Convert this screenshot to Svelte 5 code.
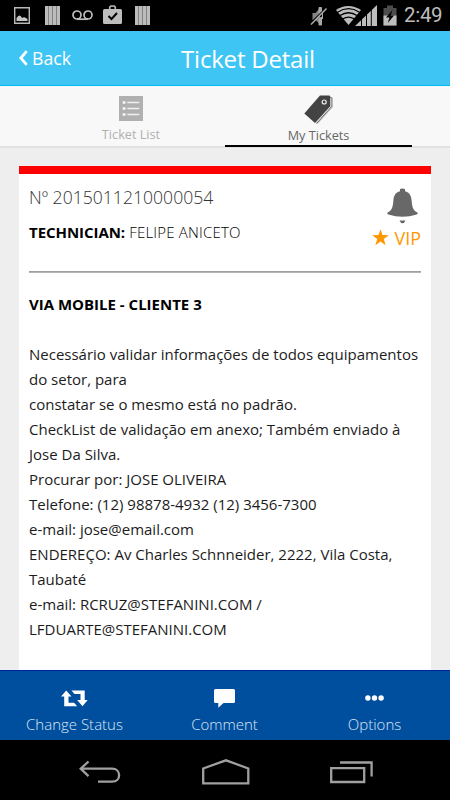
<script lang="ts">
  const description = [
    "Necessário validar informações de todos equipamentos",
    "do setor, para",
    "constatar se o mesmo está no padrão.",
    "CheckList de validação em anexo; Também enviado à",
    "Jose Da Silva.",
    "Procurar por: JOSE OLIVEIRA",
    "Telefone: (12) 98878-4932 (12) 3456-7300",
    "e-mail: jose@email.com",
    "ENDEREÇO: Av Charles Schnneider, 2222, Vila Costa,",
    "Taubaté",
    "e-mail: RCRUZ@STEFANINI.COM /",
    "LFDUARTE@STEFANINI.COM",
  ];

  let tab = $state<"list" | "mine">("mine");
</script>

{#snippet bars()}
  <svg class="bars" width="15" height="19" viewBox="0 0 15 19">
    <path d="M0 0h15v19H0z" fill="#828282" />
    <path d="M0 0h3v19H0zM4 0h3v19H4zM8 0h3v19H8zM12 0h3v19h-3z" fill="#bcbcbc" />
  </svg>
{/snippet}

<div class="screen">
  <div class="status">
    <div class="notifications">
      <svg width="16" height="17" viewBox="0 0 16 17">
        <path d="M.7.7h14.6v15.6H.7z" fill="none" stroke="#b8b8b8" stroke-width="1.4" />
        <path d="M2.500 14v-3q1.500-2.500 3-2.500T8 11q1.500-1 3-.5t2.500 1.500v2z" fill="#c4c4c4" />
      </svg>
      {@render bars()}
      <svg class="voicemail" width="21" height="11" viewBox="0 0 21 11">
        <g fill="none" stroke="#bdbdbd" stroke-width="1.7">
          <circle cx="5" cy="5" r="4" />
          <circle cx="16" cy="5" r="4" />
          <path d="M5 9.2h11" />
        </g>
      </svg>
      <svg class="case" width="19" height="20" viewBox="0 0 19 20">
        <path d="M6.7 5V2.2L8 1h3l1.3 1.2V5" fill="none" stroke="#bdbdbd" stroke-width="1.6" />
        <rect y="4" width="19" height="15" rx="1.5" fill="#bdbdbd" />
        <path d="M5.5 11l3 3 5.5-6" fill="none" stroke="#000" stroke-width="2" />
      </svg>
      {@render bars()}
    </div>
    <div class="system">
      <svg class="mute" width="18" height="20" viewBox="0 0 18 20">
        <path d="M2.500 7h3L10 2v16l-4.500-4h-3z" fill="#858585" />
        <path d="M9 1.500h2.500V7L9 9zM9 13l2.500-2v8H9zM12.500 7v6" fill="#a8a8a8" stroke="#a8a8a8" />
        <path d="M15.500 2.500L.2 17.500" stroke="#000" stroke-width="1.300" />
        <path d="M16.5 2.5L1 18.5" stroke="#aaa" stroke-width="1.5" />
      </svg>
      <svg class="wifi" width="25" height="19" viewBox="0 0 25 19">
        <path d="M0 4Q12 -4 25 4L12.5 19z" fill="#bdbdbd" />
        <path
          d="M1.5 6.2Q12.5 -1 23.5 6.2M4 9.5Q12.5 4 21 9.5M7 12.8Q12.5 9.5 18 12.8"
          fill="none"
          stroke="#000"
          stroke-width="1.3"
        />
      </svg>
      <svg class="signal" width="22" height="21" viewBox="0 0 22 21">
        <path d="M0 21L22 0v21z" fill="#bdbdbd" />
        <path d="M6.5 12v9M11.5 8v13M16.3 3v18" stroke="#000" stroke-width="1" />
      </svg>
      <svg class="battery" width="14" height="21" viewBox="0 0 14 21">
        <path d="M.5 3H4V.5h6V3h3.5v17.5H.5z" fill="#4c4c4c" />
        <path d="M.5 10.5h13v10H.5z" fill="#bdbdbd" />
        <path d="M9.5 5L3 12.5h3.5L4.8 18l6.2-7.5H7.7z" fill="#000" />
      </svg>
      <span class="clock">2:49</span>
    </div>
  </div>

  <header>
    <button class="back">
      <svg width="9" height="16" viewBox="0 0 9 16">
        <path d="M7.7 1.2L1.8 8l5.9 6.8" fill="none" stroke="#fff" stroke-width="2.8" />
      </svg>
      <span>Back</span>
    </button>
    <h1>Ticket Detail</h1>
  </header>

  <nav class="tabs">
    <button class="tab" class:on={tab === "list"} onclick={() => (tab = "list")}>
      <svg width="24" height="25" viewBox="0 0 24 25">
        <path d="M0 0h24v25H0z" fill="#b0b0b0" />
        <path
          d="M3.7 6.5h2.8M3.7 12.5h2.8M3.7 18.5h2.8"
          stroke="#f8f8f8"
          stroke-width="2.4"
        />
        <path d="M8.3 6.5h12M8.3 12.5h12M8.3 18.5h12" stroke="#f0f0f0" stroke-width="1.5" />
      </svg>
      <span>Ticket List</span>
    </button>
    <button class="tab mine" class:on={tab === "mine"} onclick={() => (tab = "mine")}>
      <svg width="29" height="29" viewBox="0 0 29 29">
        <path d="M26 2l3 1v9L14 28.5l-3-.5z" fill="#b9b9b9" />
        <path d="M27.2 2v9.7L12.5 28.6" fill="none" stroke="#555" stroke-width=".8" />
        <path d="M16 .5h9.5L26.5 2v9L11 28 .3 18.5z" fill="#434343" />
        <path d="M26.8 3v8.3L11.8 28" fill="none" stroke="#f8f8f8" stroke-width=".8" />
        <circle cx="20.2" cy="7" r="2" fill="#434343" stroke="#eee" stroke-width="1.2" />
      </svg>
      <span>My Tickets</span>
    </button>
  </nav>

  <main>
    <article>
      <div class="summary">
        <div>
          <div class="number">Nº 2015011210000054</div>
          <div class="tech"><b>TECHNICIAN:</b> FELIPE ANICETO</div>
        </div>
        <div class="flags">
          <svg width="31" height="36" viewBox="0 0 31 36">
            <path
              d="M13 1q2.500-1 5 0v2.200c4.500 1 6.200 4.500 6.600 9 .5 6.500 1.300 10 5.400 12 1 .7 1 1.600-.3 2.300Q15.500 31 1.300 26.500C0 25.800 0 24.900 1 24.200c4.100-2 4.900-5.500 5.400-12 .4-4.500 2.100-8 6.600-9z"
              fill="#686868"
            />
            <path d="M12.500 32.500h6q-1 2.700-3 2.700t-3-2.700z" fill="#686868" />
          </svg>
          <div class="vip">
            <svg width="17" height="17" viewBox="0 0 17 17">
              <path
                d="M8.500.3l2 5.800 6.300.1-5 3.900 1.800 6.100-5.100-3.600-5.100 3.600 1.800-6.100-5-3.900 6.300-.1z"
                fill="#ff9800"
              />
            </svg>
            <span>VIP</span>
          </div>
        </div>
      </div>
      <hr />
      <h2>VIA MOBILE - CLIENTE 3</h2>
      <div class="description">
        {#each description as line}
          <p>{line}</p>
        {/each}
      </div>
    </article>
  </main>

  <footer>
    <button>
      <svg width="27" height="17" viewBox="0 0 27 17">
        <path
          d="M5.200.5L10.500 6.500H7.500v6.300h5.500l3.200 3.400H3.200V6.500H0zM10.500.5h13.200V10h3L21.500 16.300 16.200 10h3.300V4h-6z"
          fill="#fff"
        />
      </svg>
      <span>Change Status</span>
    </button>
    <button>
      <svg width="21" height="19" viewBox="0 0 21 19">
        <path d="M1.500 0h18q1.500 0 1.500 1.500v11q0 1.500-1.500 1.500H9.500L4.300 18.800V14H1.500Q0 14 0 12.500v-11Q0 0 1.500 0z" fill="#fff" />
      </svg>
      <span>Comment</span>
    </button>
    <button>
      <svg width="19" height="17" viewBox="0 0 19 17">
        <g fill="#fff">
          <circle cx="2.900" cy="8" r="2.700" />
          <circle cx="9.500" cy="8" r="2.700" />
          <circle cx="16.100" cy="8" r="2.700" />
        </g>
      </svg>
      <span>Options</span>
    </button>
  </footer>

  <div class="keys">
    <svg width="42" height="24" viewBox="0 0 42 24">
      <path d="M9.500 1.500L1.700 8.700l7.800 7.500M2 8.700h31c9.500 0 9.500 13 0 13H19" />
    </svg>
    <svg width="48" height="26" viewBox="0 0 48 26">
      <path d="M1.200 24.400V9.500L24 1.300l22.300 8.200v14.900z" />
    </svg>
    <svg width="43" height="24" viewBox="0 0 43 24">
      <path d="M1.200 8.200h33v13.800h-33zM10 2.500h31.600v14" />
    </svg>
  </div>
</div>

<style>
  :global(body) {
    margin: 0;
    background: #000;
  }
  .screen {
    width: 450px;
    height: 800px;
    display: flex;
    flex-direction: column;
    overflow: hidden;
    background: #eee;
    font-family: "Open Sans", sans-serif;
    color: #000;
  }
  svg {
    display: block;
    flex: none;
  }
  button {
    border: none;
    padding: 0;
    background: none;
    font: inherit;
    color: inherit;
  }
  .status {
    flex: none;
    height: 31px;
    box-sizing: border-box;
    padding: 0 8px 0 14px;
    display: flex;
    justify-content: space-between;
    background: #000;
  }
  .notifications,
  .system {
    display: flex;
    align-items: center;
  }
  .bars {
    margin-left: 15px;
  }
  .voicemail {
    margin-left: 12px;
  }
  .case {
    margin: -2px -2px 0 10px;
  }
  .wifi {
    margin: -1px 0 0 8px;
  }
  .signal {
    margin-left: -6px;
  }
  .battery {
    margin-left: 6px;
  }
  .clock {
    margin-left: 7px;
    width: 38px;
    font: 20.5px/33px Roboto, sans-serif;
    letter-spacing: -0.3px;
    color: #bdbdbd;
    white-space: nowrap;
  }
  header {
    flex: none;
    height: 55px;
    box-sizing: border-box;
    display: grid;
    grid-template-columns: 100px 1fr 54px;
    background: #3fc5f3;
    border-bottom: 1px solid #03b9f4;
    color: #fff;
  }
  .back {
    display: flex;
    align-items: center;
    gap: 4px;
    padding-left: 19px;
    padding-bottom: 2px;
    font-size: 17.7px;
  }
  h1 {
    margin: 0;
    font-size: 24px;
    line-height: 55px;
    font-weight: 400;
    letter-spacing: -0.2px;
    text-align: center;
    white-space: nowrap;
  }
  .tabs {
    flex: none;
    height: 62px;
    box-sizing: border-box;
    padding: 0 38px;
    display: grid;
    grid-template-columns: 1fr 1fr;
    background: #f8f8f8;
    border-bottom: 2px solid #e1e1e1;
  }
  .tab {
    height: 61px;
    box-sizing: border-box;
    padding: 10px 1px 0 0;
    display: flex;
    flex-direction: column;
    align-items: center;
    gap: 4px;
    font-size: 12.7px;
    line-height: 18px;
    color: #b0b0b0;
    border-bottom: 2px solid transparent;
  }
  .tab.mine {
    padding: 9px 0 0;
    gap: 2px;
  }
  .tab.on {
    color: #666;
    border-bottom-color: #000;
  }
  main {
    flex: 1;
    min-height: 0;
    padding: 18px 19px 0;
    overflow: hidden;
  }
  article {
    height: 100%;
    box-sizing: border-box;
    padding: 0 10px;
    background: #fff;
    border-top: 8px solid #f00;
  }
  .summary {
    height: 97px;
    display: flex;
    justify-content: space-between;
  }
  .number {
    padding-top: 11px;
    font-size: 17.6px;
    line-height: 25px;
    font-weight: 300;
    color: #333;
  }
  .tech {
    padding-top: 10px;
    font-size: 15px;
    line-height: 24px;
    font-weight: 300;
    letter-spacing: 0.2px;
  }
  .tech b {
    font-weight: 700;
    letter-spacing: -0.05px;
  }
  .flags {
    display: flex;
    flex-direction: column;
    align-items: flex-end;
    padding-top: 14px;
  }
  .flags > svg {
    margin-right: 3px;
  }
  .vip {
    display: flex;
    align-items: center;
    gap: 5px;
    font-size: 18px;
    line-height: 29px;
    color: #ff9800;
  }
  .vip svg {
    margin-bottom: 3px;
  }
  hr {
    margin: 0;
    height: 2px;
    border: none;
    box-sizing: border-box;
    border-top: 1px solid #a0a0a0;
    background: #b4b4b4;
  }
  h2 {
    margin: 19px 0 25px;
    font-size: 15px;
    line-height: 25px;
    font-weight: 700;
  }
  p {
    margin: 0;
    font-size: 15px;
    line-height: 25px;
    color: #1c1c1c;
    white-space: nowrap;
  }
  footer {
    flex: none;
    height: 70px;
    box-sizing: border-box;
    display: grid;
    grid-template-columns: repeat(3, 150px);
    background: #004f9f;
    border-top: 1px solid #00259a;
    color: #dce6f3;
  }
  footer button {
    display: flex;
    flex-direction: column;
    align-items: center;
    padding: 18px 1px 0 0;
    font-size: 15px;
    font-weight: 300;
  }
  footer svg {
    margin-bottom: 5px;
    height: 19px;
  }
  footer span {
    line-height: 22px;
  }
  .keys {
    flex: none;
    height: 60px;
    box-sizing: border-box;
    display: flex;
    align-items: center;
    gap: 80.5px;
    padding: 3px 0 0 79px;
    background: #000;
    fill: none;
    stroke: #a0a0a0;
    stroke-width: 2.3px;
  }
</style>
